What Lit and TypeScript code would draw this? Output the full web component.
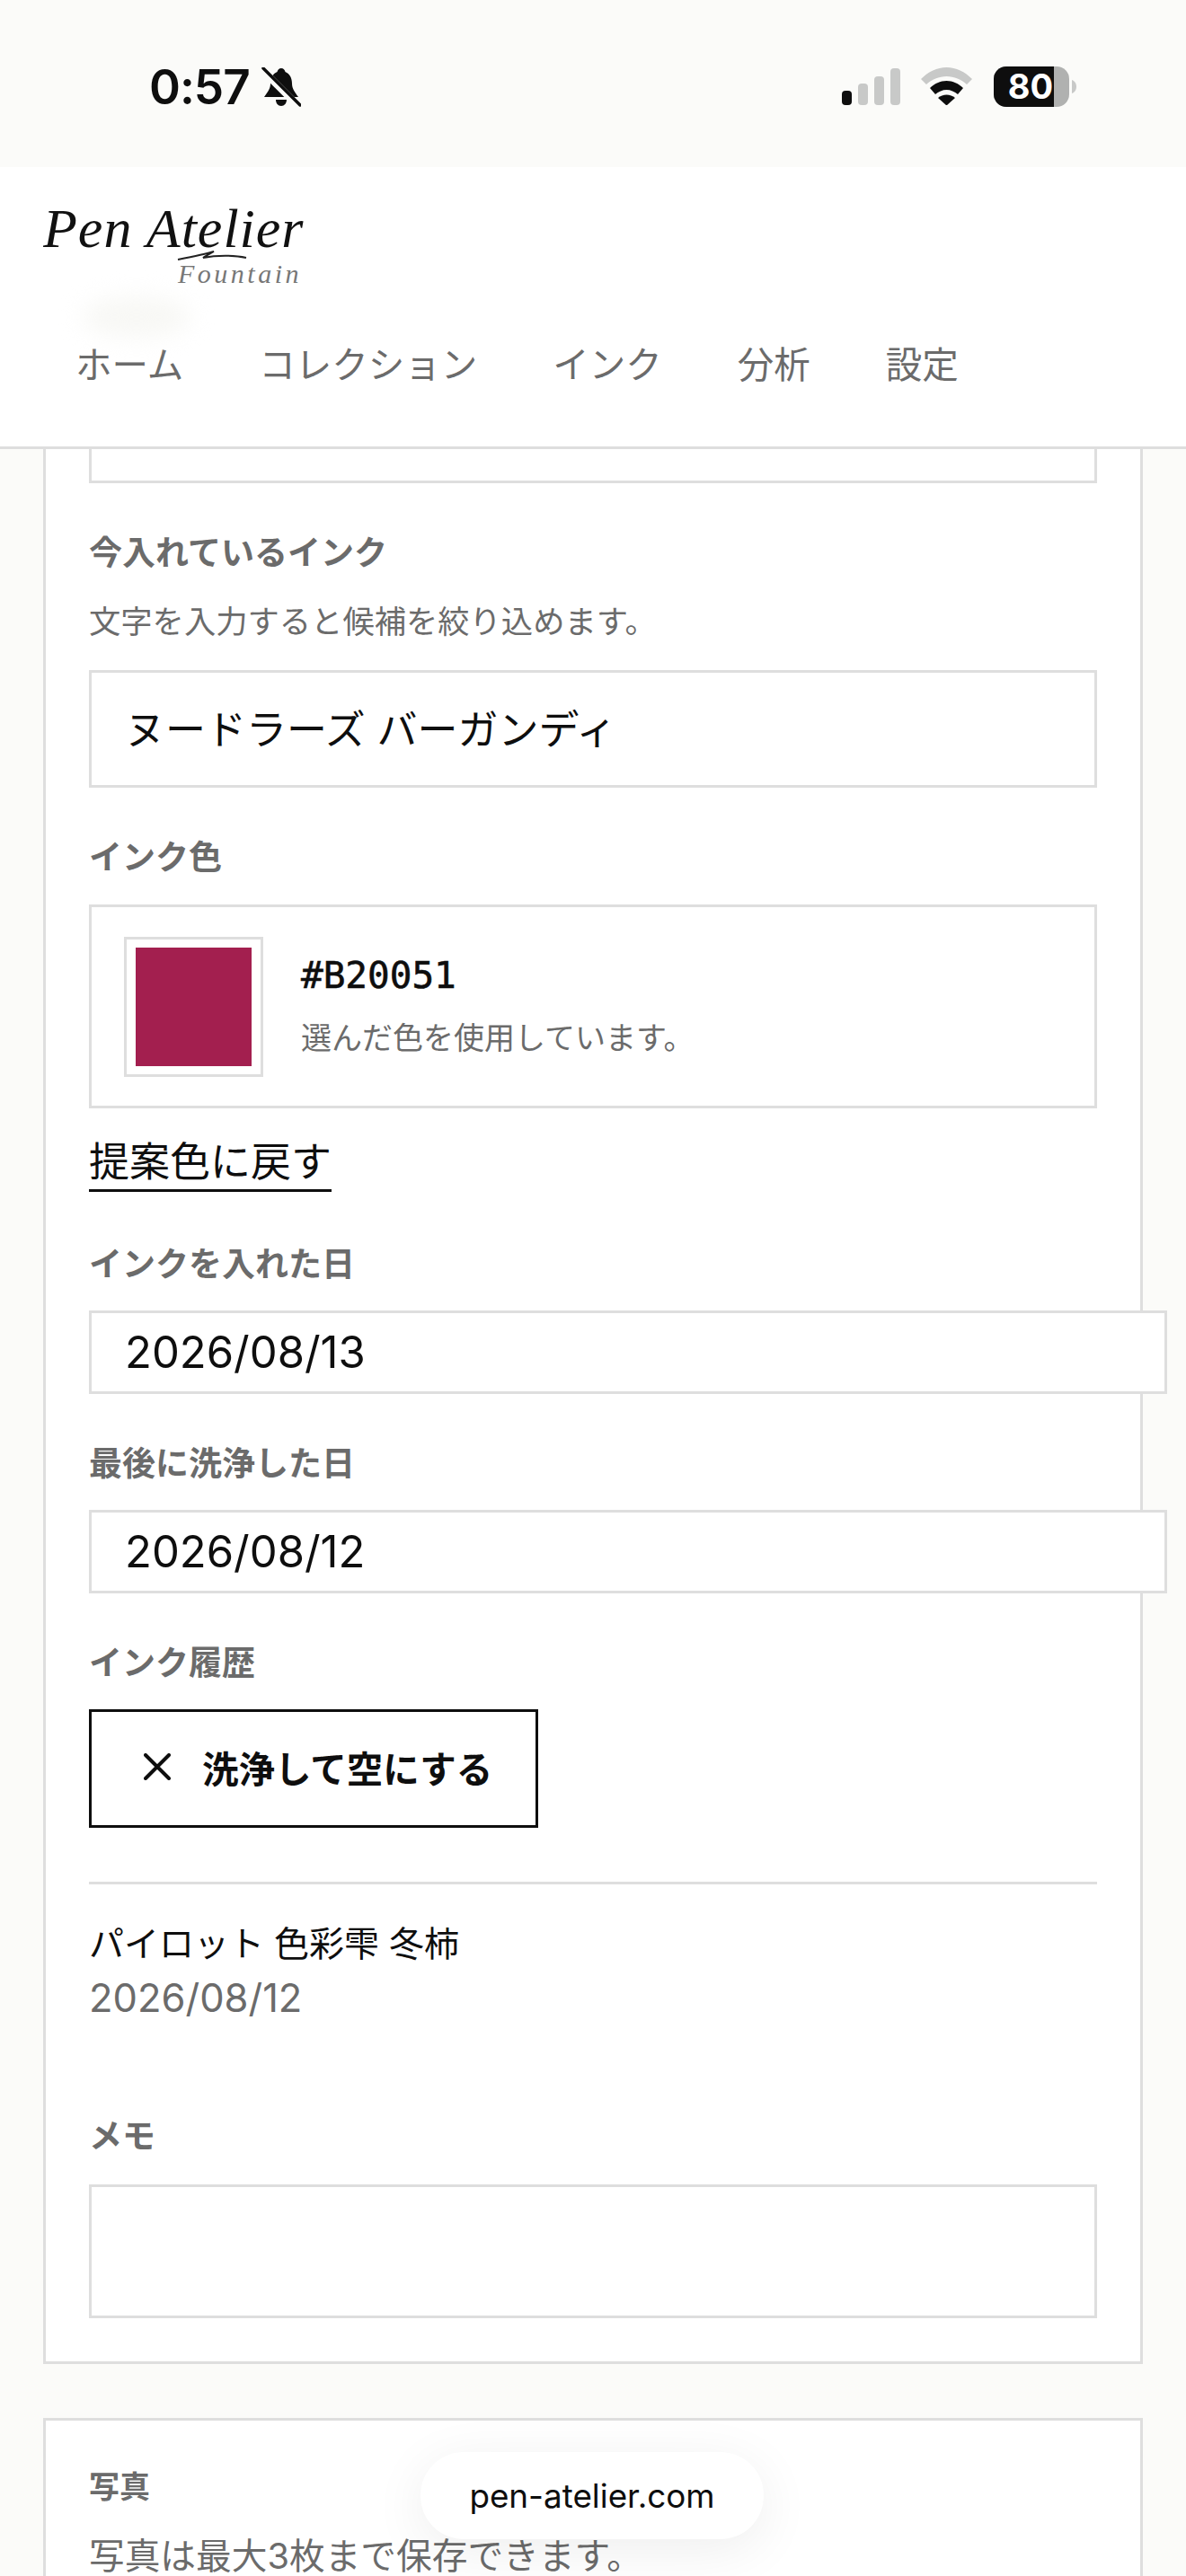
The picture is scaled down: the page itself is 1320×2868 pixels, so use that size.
import { LitElement, html, css } from "lit";
import { customElement } from "lit/decorators.js";

@customElement("app-root")
export class AppRoot extends LitElement {
  static styles = css`
    :host {
      display: block;
      width: 1320px;
      height: 2868px;
      overflow: hidden;
      position: relative;
      background: #fbfbf9;
      color: #0e0e0e;
      font-family: Inter, "Noto Sans CJK JP", sans-serif;
    }
    * { box-sizing: border-box; }
    svg { display: block; flex: none; }
    .status {
      height: 186px;
      padding: 74px 122px 0 166px;
      display: flex;
      justify-content: space-between;
      align-items: flex-start;
    }
    .left { display: flex; align-items: center; gap: 13px; margin-top: -3px; }
    .time { font-size: 53px; font-weight: 600; line-height: 52px; letter-spacing: -1px; }
    .right { display: flex; align-items: flex-start; gap: 23px; }
    .signal { margin-top: 2px; }
    .wifi { margin-top: 1px; }
    .battery { margin-left: 1px; }
    .battery text { font-family: Inter, sans-serif; font-weight: 700; font-size: 38px; fill: #fff; }
    header {
      height: 314px;
      background: #fff;
      border-bottom: 3px solid #dedede;
      padding: 29px 0 0 48px;
    }
    .logo { width: 320px; height: 110px; }
    .logo text { font-family: "Liberation Serif", serif; font-style: italic; }
    .logo .pen { font-size: 62px; letter-spacing: 1px; fill: #111; }
    .logo .sub { font-size: 30px; letter-spacing: 3.500px; fill: #777; }
    .smudge {
      position: absolute; left: 92px; top: 330px; width: 120px; height: 46px;
      border-radius: 50%; background: #f8f8f5; filter: blur(12px);
    }
    nav { display: flex; gap: 84px; margin-top: 52px; padding-left: 36px; font-size: 40.5px; line-height: 60px; color: #6b6b6b; }
    main { padding: 0 48px; }
    .card { background: #fff; border: 3px solid #dedede; padding: 0 48px; }
    .card.first { border-top: 0; padding-bottom: 48px; }
    .card.photo { margin-top: 60px; padding-top: 45px; height: 300px; }
    .stub { height: 38px; border: 3px solid #dedede; border-top: 0; }
    .label { font-size: 37px; line-height: 54px; padding-top: 2px; font-weight: 700; color: #6b6b6b; margin-top: 49px; }
    .hint { font-size: 35.3px; line-height: 50px; color: #6b6b6b; margin-top: 25px; }
    .box-after { margin-top: 24px; }
    .input { border: 3px solid #dedede; background: #fff; display: flex; align-items: center; padding: 0 37px; }
    .text { height: 131px; margin-top: 28px; padding-bottom: 4px; font-size: 45px; }
    .date { height: 93px; width: 1200px; font-size: 49px; }
    .swatch-box { height: 227px; margin-top: 25px; border: 3px solid #dedede; padding: 32px 36px; display: flex; gap: 42px; align-items: center; }
    .well { width: 155px; height: 156px; border: 3px solid #dedede; padding: 9px 10px; flex: none; }
    .well div { width: 100%; height: 100%; }
    .hex { font-family: "DejaVu Sans Mono", monospace; font-size: 41px; line-height: 50px; -webkit-text-stroke: 0.6px #0e0e0e; }
    .note { font-size: 34px; line-height: 50px; color: #6b6b6b; margin-top: 20px; }
    .reset-row { margin-top: 30px; }
    .reset { display: inline-block; font-size: 45px; line-height: 60px; padding-top: 2px; margin-top: -2px; border-bottom: 3px solid #0e0e0e; }
    .label.after-reset { margin-top: 52px; }
    .clear { width: 500px; height: 132px; border: 3px solid #0e0e0e; display: flex; align-items: center; gap: 35px; padding: 0 0 4px 58px; font-size: 40.5px; font-weight: 700; }
    hr { border: 0; height: 3px; background: #dedede; margin: 60px 0 0; }
    .hist { font-size: 39px; line-height: 60px; margin-top: 36px; }
    .histdate { font-size: 43.5px; line-height: 60px; color: #6b6b6b; }
    .label.memo-label { margin-top: 96px; }
    .memo { height: 149px; margin-top: 26px; border: 3px solid #dedede; }
    .label.photo-label { font-size: 34px; margin-top: 0; }
    .hint.photo-hint { font-size: 39.7px; }
    .pill {
      position: absolute; left: 468px; top: 2730px; width: 382px; height: 97px;
      border-radius: 48px; background: #fff;
      box-shadow: 0 12px 60px rgba(0,0,0,.07);
      display: flex; align-items: center; justify-content: center;
      font-size: 36.8px; color: #0e0e0e;
    }
  `;

  render() {
    const swatch = "#A31F4F";
    return html`
      <div class="status">
        <div class="left">
          <span class="time">0:57</span>
          <svg width="44" height="44" viewBox="0 0 44 44">
            <path d="M22 1c2.500 0 4 2 4.500 4 5 2 7.500 7 7.500 13 0 6 3 9 7 15H3c4-6 7-9 7-15 0-6 2.500-11 7.500-13 .5-2 2-4 4.500-4zM16 36h12c0 4-2.500 7-6 7s-6-3-6-7z" fill="#0e0e0e"/>
            <path d="M2 4l38 38" stroke="#fbfbf9" stroke-width="8"/>
            <path d="M2 1l41 41" stroke="#0e0e0e" stroke-width="3.500" stroke-linecap="round"/>
          </svg>
        </div>
        <div class="right">
          <svg class="signal" width="65" height="41" viewBox="0 0 65 41">
            <rect x="0" y="25" width="11" height="16" rx="4" fill="#0e0e0e"/>
            <rect x="18" y="17" width="11" height="24" rx="4" fill="#c8c9c8"/>
            <rect x="36" y="9" width="11" height="32" rx="4" fill="#c8c9c8"/>
            <rect x="54" y="0" width="11" height="41" rx="4" fill="#c8c9c8"/>
          </svg>
          <svg class="wifi" width="57" height="42" viewBox="0 0 57 42">
            <path d="M0 13C8 5 18 0 28.500 0S49 5 57 13l-6 6C45 13.500 37 10 28.500 10S12 13.500 6 19z" fill="#c8c9c8"/>
            <path d="M10 23c5-5 11.500-8 18.500-8S42 18 47 23l-6 7c-3.500-3-8-5-12.500-5S19.500 27 16 30z" fill="#0e0e0e"/>
            <path d="M19 34c2.500-2 6-3.500 9.500-3.500S35.500 32 38 34l-9.500 8.500z" fill="#0e0e0e"/>
          </svg>
          <svg class="battery" width="92" height="45" viewBox="0 0 92 45">
            <rect x="0" y="0" width="84" height="45" rx="14" fill="#b0b1b0"/>
            <path d="M14 0h53v45H14A14 14 0 0 1 0 31V14A14 14 0 0 1 14 0z" fill="#0e0e0e"/>
            <path d="M87 15c3 1 5 4 5 7.500S90 29 87 30z" fill="#c8c9c8"/>
            <text x="41" y="36" text-anchor="middle">80</text>
          </svg>
        </div>
      </div>
      <header>
        <svg class="logo" viewBox="0 0 320 110">
          <text class="pen" x="0" y="60">Pen Atelier</text>
          <text class="sub" x="150" y="100">Fountain</text>
          <path d="M150 74c15-3 30-6 40-9-5 3-9 5-12 7 15-3 35-3 48 0" fill="none" stroke="#222" stroke-width="2"/>
        </svg>
        <nav><span>ホーム</span><span>コレクション</span><span>インク</span><span>分析</span><span>設定</span></nav>
      </header>
      <div class="smudge"></div>
      <main>
        <section class="card first">
          <div class="stub"></div>
          <div class="label">今入れているインク</div>
          <div class="hint">文字を入力すると候補を絞り込めます。</div>
          <div class="input text">ヌードラーズ バーガンディ</div>
          <div class="label">インク色</div>
          <div class="swatch-box">
            <div class="well"><div style="background:${swatch}"></div></div>
            <div>
              <div class="hex">#B20051</div>
              <div class="note">選んだ色を使用しています。</div>
            </div>
          </div>
          <div class="reset-row"><span class="reset">提案色に戻す</span></div>
          <div class="label after-reset">インクを入れた日</div>
          <div class="input date box-after">2026/08/13</div>
          <div class="label">最後に洗浄した日</div>
          <div class="input date box-after">2026/08/12</div>
          <div class="label">インク履歴</div>
          <div class="clear box-after">
            <svg width="30" height="30" viewBox="0 0 30 30"><path d="M2 2l26 26M28 2L2 28" stroke="#0e0e0e" stroke-width="4" stroke-linecap="round"/></svg>
            <span>洗浄して空にする</span>
          </div>
          <hr />
          <div class="hist">パイロット 色彩雫 冬柿</div>
          <div class="histdate">2026/08/12</div>
          <div class="label memo-label">メモ</div>
          <div class="memo"></div>
        </section>
        <section class="card photo">
          <div class="label photo-label">写真</div>
          <div class="hint photo-hint">写真は最大3枚まで保存できます。</div>
        </section>
      </main>
      <div class="pill">pen-atelier.com</div>
    `;
  }
}
